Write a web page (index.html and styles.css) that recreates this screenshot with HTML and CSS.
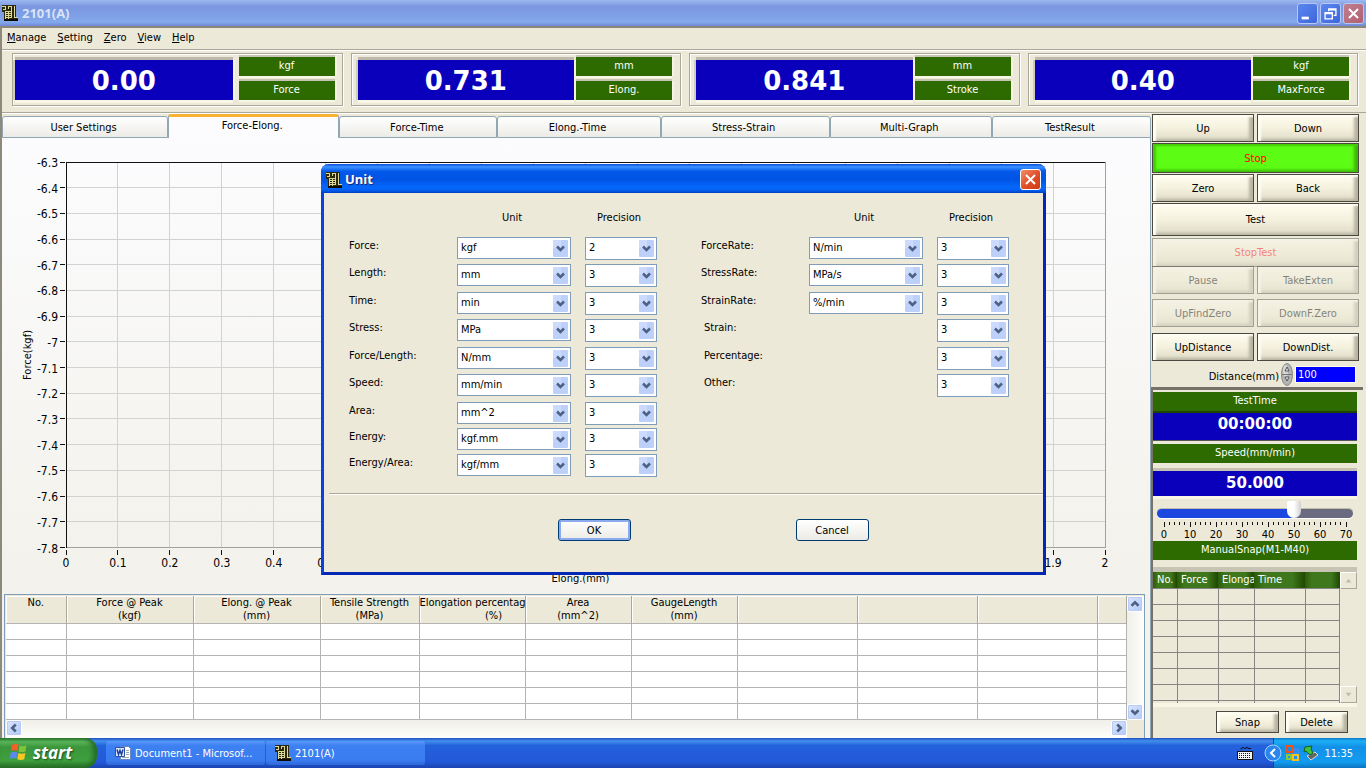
FILE: index.html
```html
<!DOCTYPE html>
<html lang="en">
<head>
    <meta charset="UTF-8">
    <meta name="viewport" content="width=device-width, initial-scale=1.0">
    <title>2101(A)</title>
    <link rel="stylesheet" href="styles.css">
</head>
<body>
    <!-- shared icons -->
    <svg class="defs" aria-hidden="true">
        <symbol id="app-icon" viewBox="0 0 16 16">
            <path fill="#2c2a0a" d="M0 0h14v12h2v4H2V7H0z"/>
            <path fill="#0c0c04" d="M2 14h14v2H2z"/>
            <path fill="none" stroke="#dcd898" d="M0 1.500h4M3.500 1v3M1 4.500h3M6.500 1v3M6 1.500h3M9.500 1v12M3.500 6v8M6.500 6v8M3 6.500h6M3 8.500h6M3 10.500h6M3 12.500h6M12.500 1v12M12 12.500h4"/>
        </symbol>
        <symbol id="close-icon" viewBox="0 0 21 21">
            <path fill="none" stroke="#fff" stroke-width="2.200" d="M5.500 5.500l10 10M15.500 5.500l-10 10"/>
        </symbol>
    </svg>

    <div class="window">
        <header class="titlebar">
            <svg class="app-icon"><use href="#app-icon"/></svg>
            <h1>2101(A)</h1>
            <button class="win-btn" aria-label="Minimize"><svg viewBox="0 0 21 21"><path fill="#fff" d="M4 14h8v3H4z"/></svg></button>
            <button class="win-btn" aria-label="Restore"><svg viewBox="0 0 21 21"><path fill="none" stroke="#fff" stroke-width="1.500" d="M8.500 8V5.500h8v7H14M8 6.500h9M4.500 9.500h8v7h-8zM4 10.500h9"/></svg></button>
            <button class="win-btn win-close" aria-label="Close"><svg><use href="#close-icon"/></svg></button>
        </header>

        <nav class="menu">
            <a href="#"><u>M</u>anage</a>
            <a href="#"><u>S</u>etting</a>
            <a href="#"><u>Z</u>ero</a>
            <a href="#"><u>V</u>iew</a>
            <a href="#"><u>H</u>elp</a>
        </nav>

        <section class="readouts">
            <div class="readout readout-first">
                <output class="value">0.00</output>
                <div class="tag">kgf</div>
                <div class="tag">Force</div>
            </div>
            <div class="readout">
                <output class="value">0.731</output>
                <div class="tag">mm</div>
                <div class="tag">Elong.</div>
            </div>
            <div class="readout">
                <output class="value">0.841</output>
                <div class="tag">mm</div>
                <div class="tag">Stroke</div>
            </div>
            <div class="readout">
                <output class="value">0.40</output>
                <div class="tag">kgf</div>
                <div class="tag">MaxForce</div>
            </div>
        </section>

        <main class="workspace">
            <section class="left">
                <div class="tabs">
                    <button class="tab">User Settings</button>
                    <button class="tab active">Force-Elong.</button>
                    <button class="tab">Force-Time</button>
                    <button class="tab">Elong.-Time</button>
                    <button class="tab">Stress-Strain</button>
                    <button class="tab">Multi-Graph</button>
                    <button class="tab">TestResult</button>
                </div>
                <div class="page">
                    <div class="chart">
                        <div class="y-title"><span>Force(kgf)</span></div>
                        <svg class="plot" id="plot"></svg>
                        <div class="x-title">Elong.(mm)</div>
                    </div>

                    <div class="results">
                        <table class="result-table">
                            <colgroup>
                                <col class="c-no"><col class="c-peak"><col class="c-peak"><col class="c-tensile">
                                <col class="c-mid"><col class="c-mid"><col class="c-mid">
                                <col class="c-blank"><col class="c-blank"><col class="c-blank"><col>
                            </colgroup>
                            <thead>
                                <tr>
                                    <th>No.</th>
                                    <th>Force @ Peak<br>(kgf)</th>
                                    <th>Elong. @ Peak<br>(mm)</th>
                                    <th>Tensile Strength<br>(MPa)</th>
                                    <th class="long"><span>Elongation percentage</span><span class="sub">(%)</span></th>
                                    <th>Area<br>(mm^2)</th>
                                    <th>GaugeLength<br>(mm)</th>
                                    <th></th><th></th><th></th><th></th>
                                </tr>
                            </thead>
                            <tbody id="resultRows"></tbody>
                        </table>
                        <div class="vscroll">
                            <button class="arrow" aria-label="Scroll up"><svg viewBox="0 0 16 16"><path d="M4 10l4-4 4 4"/></svg></button>
                            <button class="arrow" aria-label="Scroll down"><svg viewBox="0 0 16 16"><path d="M4 6l4 4 4-4"/></svg></button>
                        </div>
                        <div class="hscroll">
                            <button class="arrow" aria-label="Scroll left"><svg viewBox="0 0 16 16"><path d="M10 4L6 8l4 4"/></svg></button>
                            <button class="arrow" aria-label="Scroll right"><svg viewBox="0 0 16 16"><path d="M6 4l4 4-4 4"/></svg></button>
                        </div>
                    </div>
                </div>
            </section>

            <aside class="side">
                <div class="buttons">
                    <button class="key">Up</button>
                    <button class="key">Down</button>
                    <button class="key wide stop">Stop</button>
                    <button class="key">Zero</button>
                    <button class="key">Back</button>
                    <button class="key wide test">Test</button>
                    <button class="key wide stop-test" disabled>StopTest</button>
                    <button class="key" disabled>Pause</button>
                    <button class="key" disabled>TakeExten</button>
                    <button class="key find" disabled>UpFindZero</button>
                    <button class="key find" disabled>DownF.Zero</button>
                    <button class="key">UpDistance</button>
                    <button class="key">DownDist.</button>
                </div>
                <div class="distance">
                    <label for="distance">Distance(mm)</label>
                    <svg class="spin" viewBox="0 0 12 23">
                        <ellipse cx="6" cy="11.500" rx="5.500" ry="11" fill="#b4b4b4" stroke="#8a8a8a"/>
                        <ellipse cx="4.500" cy="8" rx="2.500" ry="6" fill="#d8d8d8"/>
                        <path d="M1 11.500h10" stroke="#777"/>
                        <path d="M4 8l2-4 2 4zM4 14l2 4 2-4z" fill="#eee" stroke="#555"/>
                    </svg>
                    <input type="text" id="distance" value="100">
                </div>

                <div class="panel">
                    <div class="tag">TestTime</div>
                    <output class="value small time">00:00:00</output>
                    <div class="tag speed-tag">Speed(mm/min)</div>
                    <output class="value small speed">50.000</output>
                    <div class="slider">
                        <input type="range" min="0" max="70" value="50" aria-label="Speed(mm/min)">
                        <svg class="scale" id="scale"></svg>
                    </div>
                    <div class="tag">ManualSnap(M1-M40)</div>
                    <div class="snap">
                        <table class="snap-table">
                            <colgroup><col class="s-no"><col class="s-force"><col class="s-elong"><col class="s-time"><col></colgroup>
                            <thead>
                                <tr><th>No.</th><th>Force</th><th>Elonga</th><th>Time</th><th></th></tr>
                            </thead>
                            <tbody id="snapRows"></tbody>
                        </table>
                        <div class="snap-scroll">
                            <button aria-label="Scroll up" disabled><svg viewBox="0 0 16 16"><path d="M5 10l3-4 3 4z"/></svg></button>
                            <button aria-label="Scroll down" disabled><svg viewBox="0 0 16 16"><path d="M5 6l3 4 3-4z"/></svg></button>
                        </div>
                    </div>
                    <div class="snap-actions">
                        <button class="key">Snap</button>
                        <button class="key">Delete</button>
                    </div>
                </div>
            </aside>
        </main>
    </div>

    <form class="dialog" role="dialog" aria-label="Unit">
        <div class="dialog-title">
            <svg class="app-icon"><use href="#app-icon"/></svg>
            <h2>Unit</h2>
            <button type="button" class="win-btn dialog-close" aria-label="Close"><svg><use href="#close-icon"/></svg></button>
        </div>
        <div class="dialog-body">
            <div class="groups">
                <div class="group">
                    <span class="head head-unit">Unit</span><span class="head">Precision</span>
                    <label for="u1">Force:</label><select id="u1"><option>kgf</option></select><select class="prec" aria-label="Force precision"><option>2</option></select>
                    <label for="u2">Length:</label><select id="u2"><option>mm</option></select><select class="prec" aria-label="Length precision"><option>3</option></select>
                    <label for="u3">Time:</label><select id="u3"><option>min</option></select><select class="prec" aria-label="Time precision"><option>3</option></select>
                    <label for="u4">Stress:</label><select id="u4"><option>MPa</option></select><select class="prec" aria-label="Stress precision"><option>3</option></select>
                    <label for="u5">Force/Length:</label><select id="u5"><option>N/mm</option></select><select class="prec" aria-label="Force/Length precision"><option>3</option></select>
                    <label for="u6">Speed:</label><select id="u6"><option>mm/min</option></select><select class="prec" aria-label="Speed precision"><option>3</option></select>
                    <label for="u7">Area:</label><select id="u7"><option>mm^2</option></select><select class="prec" aria-label="Area precision"><option>3</option></select>
                    <label for="u8">Energy:</label><select id="u8"><option>kgf.mm</option></select><select class="prec" aria-label="Energy precision"><option>3</option></select>
                    <label for="u9">Energy/Area:</label><select id="u9"><option>kgf/mm</option></select><select class="prec" aria-label="Energy/Area precision"><option>3</option></select>
                </div>
                <div class="group">
                    <span class="head head-unit">Unit</span><span class="head">Precision</span>
                    <label for="u10">ForceRate:</label><select id="u10"><option>N/min</option></select><select class="prec" aria-label="ForceRate precision"><option>3</option></select>
                    <label for="u11">StressRate:</label><select id="u11"><option>MPa/s</option></select><select class="prec" aria-label="StressRate precision"><option>3</option></select>
                    <label for="u12">StrainRate:</label><select id="u12"><option>%/min</option></select><select class="prec" aria-label="StrainRate precision"><option>3</option></select>
                    <label class="single" for="p13">Strain:</label><select class="prec" id="p13"><option>3</option></select>
                    <label class="single" for="p14">Percentage:</label><select class="prec" id="p14"><option>3</option></select>
                    <label class="single" for="p15">Other:</label><select class="prec" id="p15"><option>3</option></select>
                </div>
            </div>
            <div class="dialog-actions">
                <button type="button" class="xp-btn default">OK</button>
                <button type="button" class="xp-btn">Cancel</button>
            </div>
        </div>
    </form>

    <footer class="taskbar">
        <button class="start">
            <svg viewBox="0 0 20 20">
                <path fill="#f0602a" d="M3 3q3-2 6.500-.5L8.500 9Q5 7.500 2 9z"/>
                <path fill="#7ec43a" d="M10.500 3.500q3.500 1.500 7-.2L16.500 9.500q-3.500 1.500-7 0z"/>
                <path fill="#5a8af0" d="M1.800 10.500q3.200-1.500 6.500 0L7.300 16.800q-3.500-1.500-6.500 0z"/>
                <path fill="#f8c820" d="M9.300 11q3.500 1.600 7 0l-1 6.300q-3.500 1.600-7 0z"/>
            </svg>
            start
        </button>
        <button class="task">
            <svg viewBox="0 0 16 16">
                <path fill="#fff" stroke="#6a86c0" d="M5.500 1.500h8l2 2v11h-10z"/>
                <path stroke="#9ab" d="M11 5.500h3M11 7.500h3M11 9.500h3M7 12.500h7"/>
                <path fill="#dfe9fb" stroke="#2c4fa8" d="M.5 2.500h9v9h-9z"/>
                <path fill="none" stroke="#1b3f9c" stroke-width="1.500" d="M2 4.500l1.500 5L5 5.500l1.500 4L8 4.500"/>
            </svg>
            Document1 - Microsof...
        </button>
        <button class="task">
            <svg><use href="#app-icon"/></svg>
            2101(A)
        </button>
        <svg class="keyboard" viewBox="0 0 16 14">
            <path fill="none" stroke="#111" d="M4 3.500V2.500l2-1 2 1 2-1 2 1 2 0"/>
            <rect x=".5" y="5.500" width="15" height="8" fill="#f4f4f4" stroke="#111"/>
            <path stroke="#111" stroke-dasharray="1 1" d="M2 7.500h12M2 9.500h12M2 11.500h12"/>
        </svg>
        <div class="tray">
            <button class="expand" aria-label="Show hidden icons"><svg viewBox="0 0 18 18"><circle cx="9" cy="9" r="8" fill="#2a86ee" stroke="#a8d4ff"/><path fill="none" stroke="#fff" stroke-width="2" d="M11 5L7 9l4 4"/></svg></button>
            <svg class="tray-icon" viewBox="0 0 16 16">
                <g fill="none" stroke-width="2">
                    <path stroke="#f0521e" d="M2 1h6v6H2z"/>
                    <path stroke="#3c8cf0" d="M10 4h4v4h-4z"/>
                    <path stroke="#8cc63c" d="M3 10h4v4H3z"/>
                    <path stroke="#f8c020" d="M9 10h5v5H9z"/>
                </g>
            </svg>
            <svg class="tray-icon" viewBox="0 0 16 16">
                <path fill="#666" stroke="#ddd" d="M4 11l8-4 3 3-7 5z"/>
                <path fill="#40c040" stroke="#176017" d="M2 2l7-1-1 3 2 4-3 2-4-4-2 1z"/>
            </svg>
            <time>11:35</time>
        </div>
    </footer>

    <script>
        const NS = "http://www.w3.org/2000/svg";

        function add(svg, name, attrs, text) {
            let el = document.createElementNS(NS, name);
            for (let key in attrs) el.setAttribute(key, attrs[key]);
            if (text) el.textContent = text;
            svg.appendChild(el);
            return el;
        }

        // graph grid and axis numbers
        let plot = document.getElementById("plot");
        for (let i = 0; i <= 20; i++) {
            let x = i * 5 + "%";
            add(plot, "line", { x1: x, x2: x, y1: 0, y2: "100%", class: "grid" });
            let mark = add(plot, "svg", { x: x, y: "100%" });
            add(mark, "line", { x1: 0, x2: 0, y1: 2, y2: 7, class: "tick" });
            add(mark, "text", { x: 0, y: 19, "text-anchor": "middle" }, String(i / 10));
        }
        for (let i = 0; i <= 15; i++) {
            let y = i * 100 / 15 + "%";
            add(plot, "line", { x1: 0, x2: "100%", y1: y, y2: y, class: "grid" });
            add(plot, "line", { x1: -6, x2: -1, y1: y, y2: y, class: "tick" });
            add(plot, "text", { x: -8, y: y, dy: 5, "text-anchor": "end" }, String(-(63 + i) / 10));
        }
        add(plot, "line", { x1: 0, x2: "100%", y1: "100%", y2: "100%", class: "edge" });
        add(plot, "line", { x1: "100%", x2: "100%", y1: 0, y2: "100%", class: "edge" });
        add(plot, "line", { x1: 0, x2: "100%", y1: 0, y2: 0, class: "axis" });
        add(plot, "line", { x1: 0, x2: 0, y1: 0, y2: "100%", class: "axis" });

        // speed scale
        let scale = document.getElementById("scale");
        for (let v = 0; v <= 70; v += 2) {
            let x = v / 70 * 100 + "%";
            add(scale, "line", { x1: x, x2: x, y1: 0, y2: v % 10 ? 3 : 5, class: "tick" });
            if (v % 10 == 0) add(scale, "text", { x: x, y: 16, "text-anchor": "middle" }, String(v));
        }

        // empty table rows
        function fillRows(id, rows, cols) {
            let body = document.getElementById(id);
            for (let r = 0; r < rows; r++) {
                let row = body.insertRow(-1);
                for (let c = 0; c < cols; c++) row.insertCell(-1);
            }
        }
        fillRows("resultRows", 6, 11);
        fillRows("snapRows", 8, 5);
    </script>
</body>
</html>
```
FILE: styles.css
```css
* {
    box-sizing: border-box;
}

body {
    margin: 0;
    height: 100vh;
    display: flex;
    flex-direction: column;
    overflow: hidden;
    position: relative;
    background: #ece9d8;
    color: #000;
    font-family: Tahoma, "DejaVu Sans Condensed", "Noto Sans", sans-serif;
    font-size: 11px;
    line-height: 13px;
}

button, input, select {
    font: inherit;
    color: inherit;
    margin: 0;
    padding: 0;
}

button svg {
    display: block;
}

.defs {
    display: none;
}

.app-icon {
    width: 16px;
    height: 16px;
}

/* main window */
.window {
    flex: 1;
    min-height: 0;
    display: flex;
    flex-direction: column;
    border-left: 2px solid #8d8a7c;
}

.titlebar {
    height: 26px;
    margin-left: -2px;
    display: flex;
    align-items: center;
    gap: 2px;
    padding: 0 2px;
    background: linear-gradient(#9db9f0, #7b97e0 25%, #7e9fe6 60%, #84a9ec 85%, #6f87d8);
}

.titlebar h1 {
    flex: 1;
    margin: 0 0 0 2px;
    font-family: "Trebuchet MS", "Open Sans", sans-serif;
    font-size: 13px;
    font-weight: bold;
    color: #d8e4f8;
}

.win-btn {
    width: 21px;
    height: 21px;
    border: 1px solid #b8c8f4;
    border-radius: 3px;
    background: linear-gradient(135deg, #5c86ee, #3c66dc);
}

.win-btn svg {
    width: 19px;
    height: 19px;
}

.win-close {
    background: linear-gradient(135deg, #c08090, #b06070);
}

.menu {
    height: 24px;
    display: flex;
    align-items: center;
    gap: 11px;
    padding: 0 5px 2px;
    border-top: 2px solid #8a877a;
    border-bottom: 1px solid #aca899;
}

.menu a {
    color: #000;
    text-decoration: none;
}

.readouts {
    display: grid;
    grid-template-columns: repeat(4, 1fr);
    gap: 8px;
    padding: 2px 8px 6px 10px;
    border-top: 1px solid #fff;
    border-bottom: 1px solid #aca899;
}

.readout {
    display: grid;
    grid-template-columns: 1fr 96px;
    gap: 5px 2px;
    height: 53px;
    padding: 3px 8px 5px 6px;
    border: 1px solid #aca899;
    box-shadow: inset 1px 1px #fff, 1px 1px #fff;
}

.readout-first {
    column-gap: 6px;
    padding: 3px 7px 5px 2px;
}

.value {
    display: flex;
    align-items: center;
    justify-content: center;
    background: #0a00bc;
    color: #fff;
    font-family: "DejaVu Sans", sans-serif;
    font-size: 26px;
    font-weight: bold;
}

.readout .value {
    grid-row: span 2;
    margin-top: 3px;
    padding-top: 2px;
    box-shadow: 0 -3px #bfbaab, -2px 0 #d0ccbc, 2px 0 #f6f3e0, 0 3px #f8f6e4;
}

.tag {
    display: flex;
    align-items: center;
    justify-content: center;
    height: 19px;
    background: #2d6a00;
    color: #fff;
    padding-bottom: 2px;
}

.readout .tag {
    box-shadow: 0 -2px #c8c4b4, 2px 0 #f6f3e0, 0 2px #f8f6e4;
}

.workspace {
    flex: 1;
    min-height: 0;
    display: flex;
}

.left {
    flex: 1;
    min-width: 0;
    display: flex;
    flex-direction: column;
    border-top: 1px solid #fff;
}

/* tabs */
.tabs {
    display: grid;
    grid-template-columns: 166fr 171fr 158fr 163fr 169fr 162fr 159fr;
    align-items: end;
    height: 24px;
}

.tab {
    height: 22px;
    border: 1px solid #91a7b4;
    border-radius: 3px 3px 0 0;
    background: linear-gradient(#fff, #ecebe6);
    padding-right: 3px;
}

.tab.active {
    height: 24px;
    border-top: 3px solid #f9b233;
    border-bottom: 0;
    background: #fcfcfe;
    padding-bottom: 4px;
}

.page {
    flex: 1;
    min-height: 0;
    display: flex;
    flex-direction: column;
    padding: 0 5px 0 2px;
    border-right: 1px solid #91a7b4;
    background: linear-gradient(#fcfcfe, #f3f2ec 70%);
}

/* graph */
.chart {
    flex: 1;
    min-height: 0;
    display: grid;
    grid-template-columns: 62px 1fr 40px;
    grid-template-rows: 1fr 46px;
    padding-top: 24px;
}

.y-title {
    display: flex;
    align-items: center;
    padding-left: 17px;
}

.y-title span {
    writing-mode: vertical-rl;
    transform: rotate(180deg);
}

.plot {
    width: 100%;
    height: 100%;
    overflow: visible;
    font-size: 12px;
    shape-rendering: crispEdges;
}

.plot svg {
    overflow: visible;
}

.x-title {
    grid-row: 2;
    grid-column: 2;
    align-self: end;
    text-align: center;
    padding: 0 10px 9px 0;
}

.grid {
    stroke: #d2d2d2;
}

.tick, .axis {
    stroke: #111;
}

.edge {
    stroke: #a0a0a0;
}

/* results table */
.results {
    display: grid;
    grid-template-columns: 1fr 17px;
    border: 1px solid #7f9db9;
    border-bottom: 0;
    background: #ece9d8;
    padding: 1px 0 0 1px;
}

table {
    border-collapse: collapse;
    table-layout: fixed;
    width: 100%;
}

th {
    font-weight: normal;
    padding: 0;
    vertical-align: top;
    white-space: nowrap;
    overflow: hidden;
}

.result-table th {
    height: 28px;
    border-right: 1px solid #aca899;
    box-shadow: inset 1px 1px #fff;
}

.result-table td {
    height: 16px;
    padding: 0;
    border: 1px solid #b4b4b4;
    border-left: 0;
    background: #fff;
}

.result-table .long {
    text-align: left;
}

.long span {
    display: block;
    width: 148px;
}

.long .sub {
    text-align: center;
}

.c-no { width: 60px; }
.c-peak { width: 127px; }
.c-tensile { width: 99px; }
.c-mid { width: 106px; }
.c-blank { width: 120px; }

.vscroll, .hscroll {
    display: flex;
    justify-content: space-between;
    background: linear-gradient(to right, #f0efe8, #fefefb);
}

.vscroll {
    flex-direction: column;
}

.hscroll {
    height: 18px;
    background: linear-gradient(#f0efe8, #fefefb);
}

.arrow {
    width: 16px;
    height: 16px;
    border: 1px solid #fff;
    border-radius: 2px;
    background: linear-gradient(135deg, #dce6ff, #b0c8f8);
    box-shadow: inset 0 0 0 1px #b8cbf6;
}

.arrow svg {
    width: 14px;
    height: 14px;
    fill: none;
    stroke: #4d6185;
    stroke-width: 3;
}

/* control panel on the right */
.side {
    width: 215px;
    display: flex;
    flex-direction: column;
    padding: 1px 6px 0 1px;
}

.buttons {
    display: grid;
    grid-template-columns: 1fr 1fr;
    gap: 1px 3px;
    padding-right: 1px;
}

.key {
    height: 28px;
    border: 1px solid #4a483f;
    background: linear-gradient(#fffdf0, #f4f1de 50%, #dedac6);
    box-shadow: inset 3px 2px 2px #fffef4, inset -4px -2px 3px #b8b4a2;
}

.wide {
    grid-column: span 2;
}

.stop {
    height: 30px;
    color: #f00;
    background: #5cfc14;
    box-shadow: inset 3px 2px 2px #44cc08, inset -4px -2px 3px #3cb808;
}

.test {
    height: 33px;
}

.stop-test {
    height: 29px;
    margin: 1px 0 -2px;
    color: #f00;
}

.find {
    margin: 4px 0 5px;
}

.key:disabled {
    opacity: 0.45;
}

.distance {
    display: flex;
    align-items: center;
    justify-content: flex-end;
    gap: 2px;
    height: 26px;
    padding-right: 4px;
}

.distance label {
    padding-top: 4px;
}

.spin {
    width: 12px;
    height: 23px;
}

.distance input {
    width: 61px;
    height: 17px;
    border: 1px solid #fffde8;
    background: #0000fe;
    color: #fff;
    padding-left: 2px;
}

.panel {
    flex: 1;
    display: flex;
    flex-direction: column;
    margin: 0 -3px 0 -1px;
    padding: 2px 6px 0 0;
    border-top: 3px solid #75726a;
    border-left: 2px solid #75726a;
}

.small {
    font-size: 15px;
}

.time {
    height: 30px;
    padding-bottom: 4px;
    border-top: 2px solid #1d4500;
    border-bottom: 1px solid #555;
}

.speed-tag {
    margin-top: 3px;
}

.speed {
    height: 25px;
    margin-top: 8px;
    box-shadow: 0 -3px #c6c2b2, 0 3px #f8f6e4;
}

.slider {
    height: 45px;
    padding: 8px 4px 0;
}

.slider input {
    display: block;
    width: 100%;
    height: 18px;
    appearance: none;
    background: none;
}

.slider input::-webkit-slider-runnable-track {
    height: 9px;
    border-radius: 5px;
    background: linear-gradient(to right, #1c48e0 71%, #6a6a80 71%);
    box-shadow: 0 1px #fff, 0 -1px #c0bcac;
}

.slider input::-webkit-slider-thumb {
    appearance: none;
    width: 14px;
    height: 17px;
    margin-top: -8px;
    background: linear-gradient(to right, #fff 50%, #d0d0d0);
    border-radius: 2px 2px 7px 7px;
}

.scale {
    display: block;
    width: calc(100% - 14px);
    height: 17px;
    margin: 0 7px;
    overflow: visible;
    shape-rendering: crispEdges;
}

.snap {
    display: flex;
    margin-top: 7px;
    height: 140px;
    border-top: 5px solid #c8c4b4;
    border-bottom: 4px solid #f8f6e4;
    overflow: hidden;
}

.snap-table th {
    height: 16px;
    color: #fff;
    text-align: left;
    padding: 0 0 0 4px;
    vertical-align: middle;
    background: linear-gradient(to right, #2c5c08, #3f781c 20%, #3f781c 75%, #1f4800);
}

.snap-table td {
    height: 16px;
    padding: 0;
    border: 1px solid #858585;
    border-left: 0;
}

.s-no { width: 24px; }
.s-force { width: 41px; }
.s-elong { width: 36px; }
.s-time { width: 51px; }

.snap-scroll {
    display: flex;
    flex-direction: column;
    justify-content: space-between;
}

.snap-scroll button {
    width: 17px;
    height: 17px;
    border: 1px solid;
    border-color: #fff #aca899 #aca899 #fff;
    background: #ece9d8;
}

.snap-scroll svg {
    width: 15px;
    height: 15px;
    fill: #c0bcac;
}

.snap-actions {
    display: flex;
    justify-content: flex-end;
    gap: 6px;
    padding: 4px 9px 0 0;
}

.snap-actions .key {
    width: 63px;
    height: 22px;
}

/* unit dialog */
.dialog {
    position: absolute;
    left: 321px;
    top: 164px;
    width: 725px;
    border: 3px solid #0a3fe0;
    border-top: 0;
    border-right-color: #0428b4;
    border-bottom-color: #0428b4;
    border-radius: 8px 8px 0 0;
    background: #ece9d8;
}

.dialog-title {
    display: flex;
    align-items: center;
    height: 29px;
    margin: 0 -3px;
    padding: 2px 5px 0;
    border-radius: 8px 8px 0 0;
    background: linear-gradient(#0a4ad8, #3a92ff 10%, #0458ea 25%, #0054e4 55%, #0468fc 80%, #0460f4 90%, #0040c0);
}

.dialog-title h2 {
    flex: 1;
    margin: 0 0 0 3px;
    font-family: "Trebuchet MS", "Open Sans", sans-serif;
    font-size: 13px;
    color: #fff;
    text-shadow: 1px 1px #0a2878;
}

.dialog-close {
    border-color: #fff;
    background: linear-gradient(135deg, #f0906c, #e2512c 50%, #cc3810);
}

.dialog-body {
    padding: 18px 0 31px 5px;
}

.groups {
    display: flex;
    gap: 44px;
    padding: 0 0 15px 20px;
    border-bottom: 1px solid #aca899;
    box-shadow: 0 1px #fff;
}

.group {
    display: grid;
    grid-template-columns: 108px 128px 72px;
    grid-template-rows: 26px 27px 28px 27px 28px 27px 28px 26px 26px 24px;
    align-items: start;
}

.head {
    text-align: center;
    padding-right: 4px;
}

.group label {
    grid-column: 1;
    padding-top: 2px;
}

.group select {
    appearance: none;
    width: 114px;
    height: 22px;
    border: 1px solid #7f9db9;
    border-radius: 0;
    padding: 0 0 2px 3px;
    background: #fff url("data:image/svg+xml,%3Csvg xmlns='http://www.w3.org/2000/svg' width='15' height='17'%3E%3Crect width='15' height='17' rx='1' fill='%23bdd0fa'/%3E%3Crect width='8' height='8' fill='%23ccdafd'/%3E%3Cpath d='M4 6.5l3.500 3.500L11 6.5' fill='none' stroke='%234d6185' stroke-width='2.500'/%3E%3C/svg%3E") no-repeat right 2px center;
}

.group .prec {
    grid-column: 3;
    width: 72px;
    height: 23px;
}

.head-unit {
    grid-column: 2;
    width: 114px;
}

.group .single {
    padding-left: 3px;
}

.dialog-actions {
    display: flex;
    justify-content: center;
    gap: 165px;
    padding: 25px 0 0 54px;
}

.xp-btn {
    width: 73px;
    height: 22px;
    border: 1px solid #003c74;
    border-radius: 3px;
    background: linear-gradient(#fff, #ecebe5);
}

.default {
    box-shadow: inset 0 0 0 2px #8caaee;
}

/* taskbar */
.taskbar {
    display: flex;
    align-items: center;
    height: 30px;
    background: linear-gradient(#1f50c0, #4290ec 10%, #2462dc 25%, #2258d8 80%, #1a44b0);
    color: #fff;
}

.start {
    display: flex;
    align-items: center;
    gap: 4px;
    width: 97px;
    height: 30px;
    margin-right: 9px;
    padding: 0 0 2px 9px;
    border: 0;
    border-radius: 0 12px 12px 0;
    background: linear-gradient(#2c7c2c, #5cb85c 12%, #3c963c 30%, #3ea03e 75%, #256c25);
    box-shadow: inset -4px 0 5px #256c25;
    font-family: "Franklin Gothic Medium", "Open Sans", sans-serif;
    font-size: 17px;
    font-weight: bold;
    font-style: italic;
    text-shadow: 1px 1px 2px #1a4a1a;
}

.start svg {
    width: 20px;
    height: 20px;
}

.task {
    display: flex;
    align-items: center;
    gap: 4px;
    width: 159px;
    height: 24px;
    margin-right: 1px;
    padding: 0 9px;
    border: 0;
    border-radius: 3px;
    background: linear-gradient(#5a98fa, #3c80f2 20%, #3a7cf0 80%, #2e68d8);
    white-space: nowrap;
}

.task svg {
    flex: none;
    width: 16px;
    height: 16px;
}

.keyboard {
    width: 16px;
    height: 14px;
    margin-left: auto;
}

.tray {
    display: flex;
    align-items: center;
    height: 30px;
    margin-left: 20px;
    padding-right: 13px;
    border-left: 1px solid #0a4a9c;
    background: linear-gradient(#0c78c8, #1cb0f4 10%, #1290e8 30%, #129cf0 80%, #0c74c0);
}

.expand {
    width: 18px;
    height: 18px;
    margin-left: -10px;
    margin-right: 2px;
    border: 0;
    background: none;
}

.tray-icon {
    width: 16px;
    height: 16px;
    margin-right: 3px;
}

.tray time {
    margin-left: 2px;
}
```
